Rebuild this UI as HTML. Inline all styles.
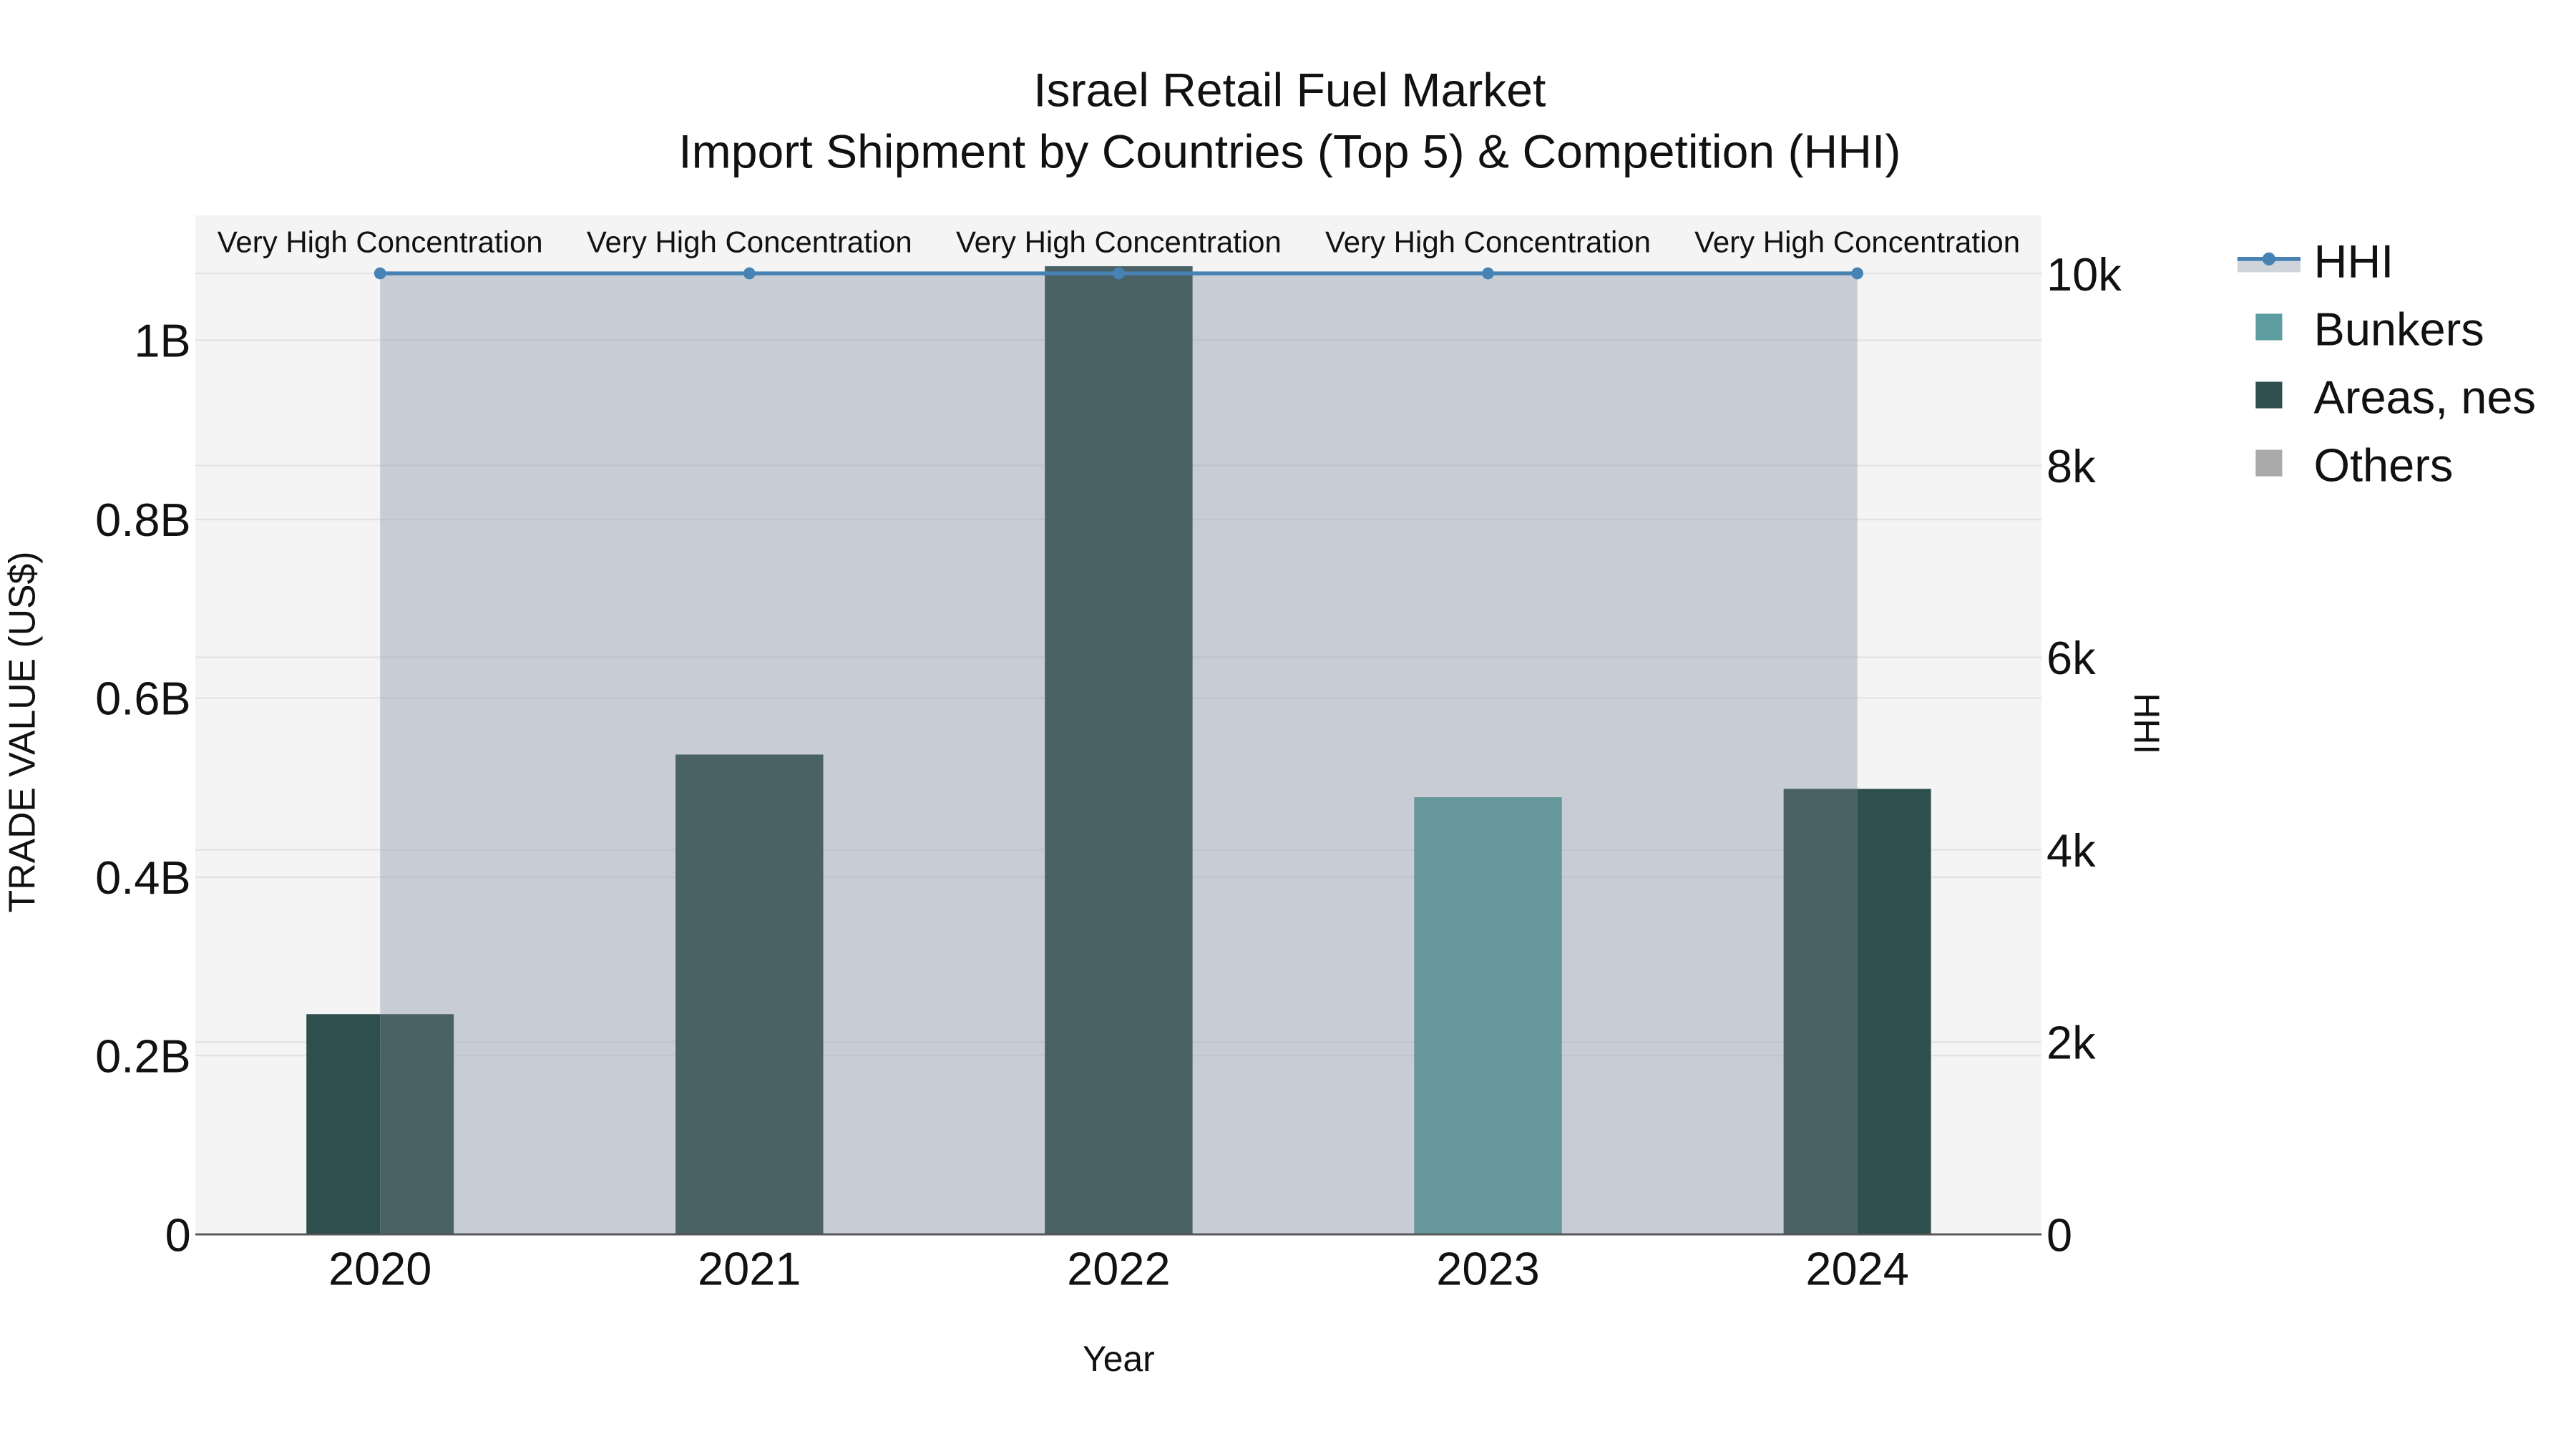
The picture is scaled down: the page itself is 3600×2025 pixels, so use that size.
<!DOCTYPE html>
<html><head><meta charset="utf-8"><style>
html,body{margin:0;padding:0;background:#fff;}
svg{display:block;}
text{font-family:"Liberation Sans",Arial,sans-serif;fill:#111;}
</style></head><body>
<svg width="3600" height="2025" viewBox="0 0 1552 873" xmlns="http://www.w3.org/2000/svg">
<rect x="0" y="0" width="1552" height="873" fill="#fff"/>
<rect x="117.7" y="129.7" width="1112.3" height="614" fill="#f4f4f4"/>
<g stroke="#e3e3e3" stroke-width="1">
<line x1="117.7" x2="1230" y1="636" y2="636"/>
<line x1="117.7" x2="1230" y1="528.5" y2="528.5"/>
<line x1="117.7" x2="1230" y1="420.5" y2="420.5"/>
<line x1="117.7" x2="1230" y1="313" y2="313"/>
<line x1="117.7" x2="1230" y1="205" y2="205"/>
<line x1="117.7" x2="1230" y1="627.9" y2="627.9"/>
<line x1="117.7" x2="1230" y1="512" y2="512"/>
<line x1="117.7" x2="1230" y1="396" y2="396"/>
<line x1="117.7" x2="1230" y1="280.5" y2="280.5"/>
<line x1="117.7" x2="1230" y1="164.7" y2="164.7"/>
</g>
<rect x="229" y="164.7" width="890" height="579" fill="#c8cdd5"/>
<g stroke="#bfc4cc" stroke-width="1">
<line x1="229" x2="1119" y1="636" y2="636"/>
<line x1="229" x2="1119" y1="528.5" y2="528.5"/>
<line x1="229" x2="1119" y1="420.5" y2="420.5"/>
<line x1="229" x2="1119" y1="313" y2="313"/>
<line x1="229" x2="1119" y1="205" y2="205"/>
<line x1="229" x2="1119" y1="627.9" y2="627.9"/>
<line x1="229" x2="1119" y1="512" y2="512"/>
<line x1="229" x2="1119" y1="396" y2="396"/>
<line x1="229" x2="1119" y1="280.5" y2="280.5"/>
</g>
<rect x="184.6" y="611" width="44.4" height="132.7" fill="#2f4f4f"/>
<rect x="229" y="611" width="44.4" height="132.7" fill="#4a6166"/>
<rect x="407" y="454.6" width="89" height="289.1" fill="#4a6166"/>
<rect x="629.5" y="160.4" width="89" height="583.3" fill="#4a6166"/>
<rect x="852" y="480.3" width="89" height="263.4" fill="#66979b"/>
<rect x="1074.6" y="475.3" width="44.4" height="268.4" fill="#4a6166"/>
<rect x="1119" y="475.3" width="44.4" height="268.4" fill="#2f4f4f"/>
<line x1="117.7" x2="1230" y1="743.7" y2="743.7" stroke="#555" stroke-width="1.2"/>
<polyline points="229,164.7 451.5,164.7 674,164.7 896.5,164.7 1119,164.7" fill="none" stroke="#4682b4" stroke-width="2.3"/>
<g fill="#4682b4">
<circle cx="229" cy="164.7" r="3.6"/><circle cx="451.5" cy="164.7" r="3.6"/><circle cx="674" cy="164.7" r="3.6"/><circle cx="896.5" cy="164.7" r="3.6"/><circle cx="1119" cy="164.7" r="3.6"/>
</g>
<g font-size="18.1" text-anchor="middle">
<text x="229" y="152">Very High Concentration</text>
<text x="451.5" y="152">Very High Concentration</text>
<text x="674" y="152">Very High Concentration</text>
<text x="896.5" y="152">Very High Concentration</text>
<text x="1119" y="152">Very High Concentration</text>
</g>
<g font-size="28.5" text-anchor="middle">
<text x="777" y="64">Israel Retail Fuel Market</text>
<text x="777" y="101">Import Shipment by Countries (Top 5) &amp; Competition (HHI)</text>
</g>
<g font-size="28" text-anchor="end">
<text x="115" y="753.7">0</text>
<text x="115" y="646">0.2B</text>
<text x="115" y="538.5">0.4B</text>
<text x="115" y="430.5">0.6B</text>
<text x="115" y="323">0.8B</text>
<text x="115" y="215">1B</text>
</g>
<g font-size="28" text-anchor="start">
<text x="1233" y="753.7">0</text>
<text x="1233" y="637.9">2k</text>
<text x="1233" y="522">4k</text>
<text x="1233" y="406">6k</text>
<text x="1233" y="290.5">8k</text>
<text x="1233" y="175">10k</text>
</g>
<g font-size="28" text-anchor="middle">
<text x="229" y="774">2020</text>
<text x="451.5" y="774">2021</text>
<text x="674" y="774">2022</text>
<text x="896.5" y="774">2023</text>
<text x="1119" y="774">2024</text>
</g>
<text x="674" y="826" font-size="21.5" text-anchor="middle">Year</text>
<text transform="translate(21,441) rotate(-90)" font-size="22.3" text-anchor="middle">TRADE VALUE (US$)</text>
<text transform="translate(1286,436) rotate(90)" font-size="21.5" text-anchor="middle">HHI</text>
<rect x="1348" y="156" width="38" height="8" fill="#cfd3da"/>
<line x1="1348" x2="1386" y1="156" y2="156" stroke="#4682b4" stroke-width="2.5"/>
<circle cx="1367" cy="156" r="3.9" fill="#4682b4"/>
<rect x="1359" y="189" width="16" height="16" fill="#5f9ea0"/>
<rect x="1359" y="230" width="16" height="16" fill="#2f4f4f"/>
<rect x="1359" y="271" width="16" height="16" fill="#aaaaaa"/>
<g font-size="28">
<text x="1394" y="167">HHI</text>
<text x="1394" y="208">Bunkers</text>
<text x="1394" y="249">Areas, nes</text>
<text x="1394" y="290">Others</text>
</g>
</svg>
</body></html>
